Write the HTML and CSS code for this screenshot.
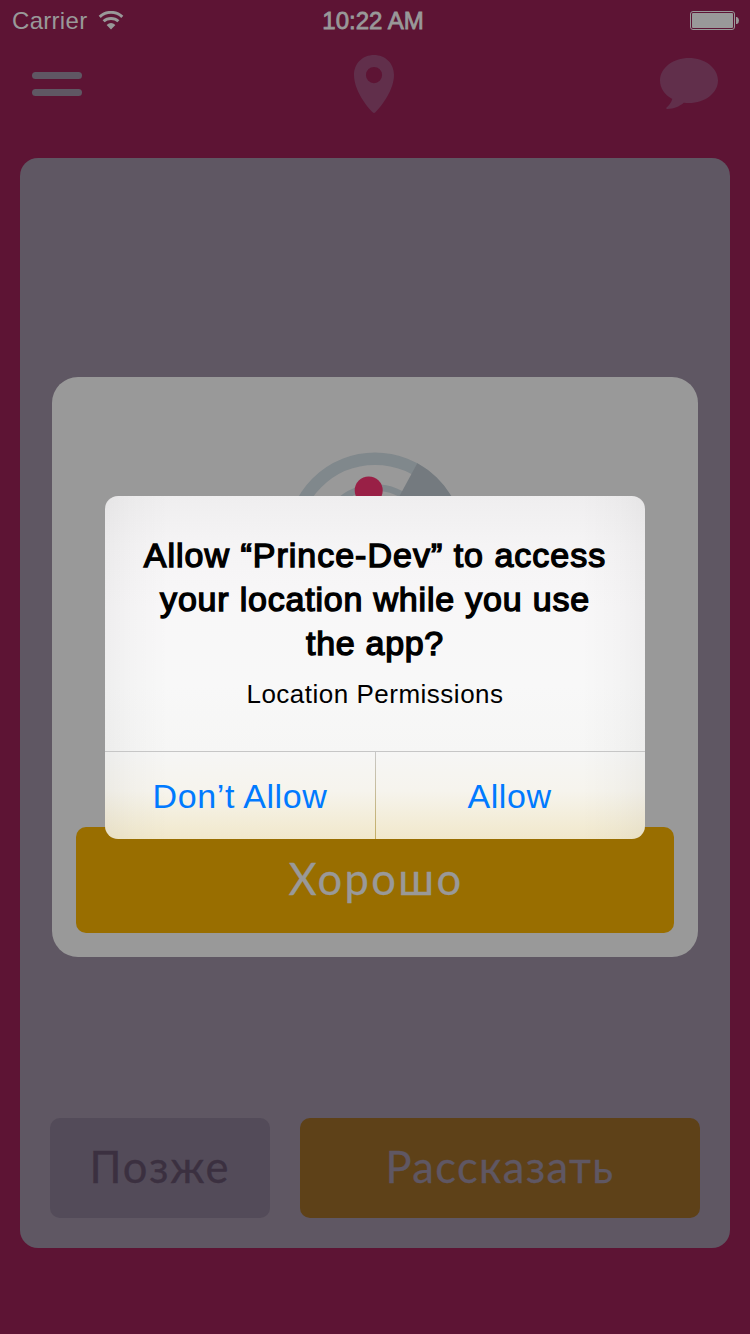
FILE: index.html
```html
<!DOCTYPE html>
<html lang="ru">
<head>
<meta charset="utf-8">
<title>Prince</title>
<link rel="stylesheet" href="styles.css">
</head>
<body>
<div class="screen">
  <header class="status">
    <div class="status-left">
      <span class="carrier">Carrier</span>
      <svg class="wifi" width="26" height="19" viewBox="0 0 26 19">
        <path d="M1.700 5.800a16.600 16.600 0 0 1 22.600 0" fill="none" stroke="#999" stroke-width="3"/>
        <path d="M5.600 10.300a11 11 0 0 1 14.800 0" fill="none" stroke="#999" stroke-width="2.900"/>
        <path d="M8.600 14Q13 10.200 17.400 14L13 18.500Z" fill="#999"/>
      </svg>
    </div>
    <span class="clock">10:22 AM</span>
    <div class="status-right">
      <svg width="50" height="20" viewBox="0 0 50 20">
        <rect x=".5" y=".5" width="44" height="18" rx="2.500" fill="none" stroke="#999"/>
        <rect x="2" y="2" width="41" height="15" rx="1" fill="#999"/>
        <path d="M46 6h1q2 1 2 3.500t-2 3.500h-1z" fill="#999"/>
      </svg>
    </div>
  </header>
  <nav class="nav">
    <div class="menu"><i></i><i></i></div>
    <svg class="pin" width="40" height="58" viewBox="0 0 40 58">
      <path fill="#612f4b" fill-rule="evenodd" d="M20 0C8.500 0 0 8.500 0 20c0 14 11 29.500 18.600 37.300q1.400 1.200 2.800 0C29 49.500 40 34 40 20 40 8.500 31.500 0 20 0zm0 12a8.100 8.100 0 1 1 0 16.200A8.100 8.100 0 0 1 20 12z"/>
    </svg>
    <svg class="chat" width="58" height="52" viewBox="0 0 58 52">
      <path fill="#612f4b" d="M29 0C13 0 0 10 0 22.500 0 30 4.500 36.800 12.300 41 11 45 9 47.500 6.300 49.700q-.5 1.300 1 1.300C14 51 19 48.700 23.800 44.800Q26.500 45 29 45c16 0 29-10 29-22.500S45 0 29 0z"/>
    </svg>
  </nav>
  <main class="panel">
    <div class="actions">
      <div class="btn later">Позже</div>
      <div class="btn tell">Рассказать</div>
    </div>
  </main>

  <div class="layer">
    <section class="card">
      <svg class="radar" width="178" height="178" viewBox="-89 -89 178 178">
        <circle r="82.200" fill="none" stroke="#80888c" stroke-width="12.600"/>
        <circle r="53.500" fill="none" stroke="#80888c" stroke-width="6.500"/>
        <path d="M0 0L42.300-77.700A88.500 88.500 0 0 1 88.500 0Z" fill="#747a7f"/>
        <circle cx="-6.300" cy="-50.500" r="14" fill="#992046"/>
      </svg>
      <div class="btn ok">Хорошо</div>
    </section>
  </div>

  <div class="layer">
    <section class="alert" lang="en">
      <div class="alert-body">
        <h1 class="alert-title"><span class="l1">Allow “Prince-Dev” to access</span><br><span class="l2">your location while you use</span><br><span class="l3">the app?</span></h1>
        <p class="alert-text">Location Permissions</p>
      </div>
      <div class="alert-actions">
        <div class="choice deny">Don’t Allow</div>
        <div class="choice allow">Allow</div>
      </div>
    </section>
  </div>
</div>
</body>
</html>
```
FILE: styles.css
```css
* { box-sizing: border-box; }
body { margin: 0; }
.screen {
  position: relative;
  width: 750px;
  height: 1334px;
  padding: 0 20px;
  overflow: hidden;
  background: #5d1434;
  font-family: "Liberation Sans", sans-serif;
}
.status {
  display: grid;
  grid-template-columns: 1fr auto 1fr;
  align-items: center;
  height: 42px;
  margin: 0 -20px;
  padding: 0 10px 0 12px;
  color: #999;
  font-size: 24px;
}
.status-left { display: flex; align-items: center; gap: 10.5px; }
.carrier { letter-spacing: 0.3px; }
.wifi { margin-top: -2px; }
.clock { -webkit-text-stroke: 0.8px #999; margin-right: 6px; }
.status-right { display: flex; justify-content: flex-end; }
.nav {
  display: grid;
  grid-template-columns: 1fr auto 1fr;
  align-items: start;
  height: 116px;
  padding: 13px 12px 0;
}
.menu { display: grid; gap: 10px; width: 50px; padding-top: 17px; }
.menu i { height: 7px; border-radius: 4px; background: #5f5763; }
.pin { margin-right: 2px; }
.chat { justify-self: end; margin-top: 3px; }
.panel {
  display: flex;
  flex-direction: column;
  justify-content: flex-end;
  height: 1090px;
  padding: 30px;
  border-radius: 18px;
  background: #5f5763;
}
.actions { display: grid; grid-template-columns: 220px 400px; gap: 30px; height: 100px; }
.btn {
  display: flex;
  align-items: center;
  justify-content: center;
  padding-bottom: 4px;
  border-radius: 10px;
  font-family: Lato, "Noto Sans", sans-serif;
  font-size: 43.5px;
  line-height: 52px;
  -webkit-text-stroke: 0.3px currentColor;
}
.later { background: #534b59; color: #3b3040; letter-spacing: 1.9px; }
.tell { background: #5e4118; color: #5f5763; letter-spacing: 1.3px; }
.layer { position: absolute; inset: 0; display: grid; place-items: center; }
.card {
  display: flex;
  flex-direction: column;
  align-items: center;
  justify-content: space-between;
  width: 646px;
  height: 580px;
  padding: 75px 24px 24px;
  border-radius: 26px;
  background: #999;
}
.ok {
  width: 598px;
  height: 106px;
  padding-left: 2px;
  background: #996e00;
  color: #999;
  letter-spacing: 2.4px;
}
.alert {
  display: flex;
  flex-direction: column;
  width: 540px;
  height: 343px;
  margin-top: 1px;
  border-radius: 13px;
  overflow: hidden;
  color: #000;
  text-align: center;
  background:
    linear-gradient(90deg, rgba(0,0,0,.04), rgba(0,0,0,.015) 28px, transparent 65px, transparent 475px, rgba(0,0,0,.015) 512px, rgba(0,0,0,.04)),
    linear-gradient(#efeeef, #f5f4f5 50px, #f8f7f8 110px, #f8f8f8 190px, #f6f6f5 256px, #f6f4ed 295px, #f1e8cb 343px);
}
.alert-body { height: 255px; padding-top: 37px; }
.alert-title {
  margin: 0;
  font-size: 34px;
  font-weight: 400;
  line-height: 44px;
  white-space: nowrap;
  -webkit-text-stroke: 1.4px #000;
}
.l1 { letter-spacing: 1px; }
.l2 { letter-spacing: 0.8px; }
.l3 { letter-spacing: 0.7px; }
.alert-text { margin: 14px 0 0; font-size: 26px; line-height: 30px; letter-spacing: 0.5px; }
.alert-actions {
  display: grid;
  grid-template-columns: 271px 1fr;
  height: 88px;
  border-top: 1px solid #c6c6c6;
}
.choice { padding-top: 22px; color: #007aff; font-size: 34px; line-height: 44px; letter-spacing: 0.6px; }
.deny { border-right: 1px solid; border-image: linear-gradient(#c8c8c8, #c4ad62) 1; }
.allow { padding-right: 2px; }
```
